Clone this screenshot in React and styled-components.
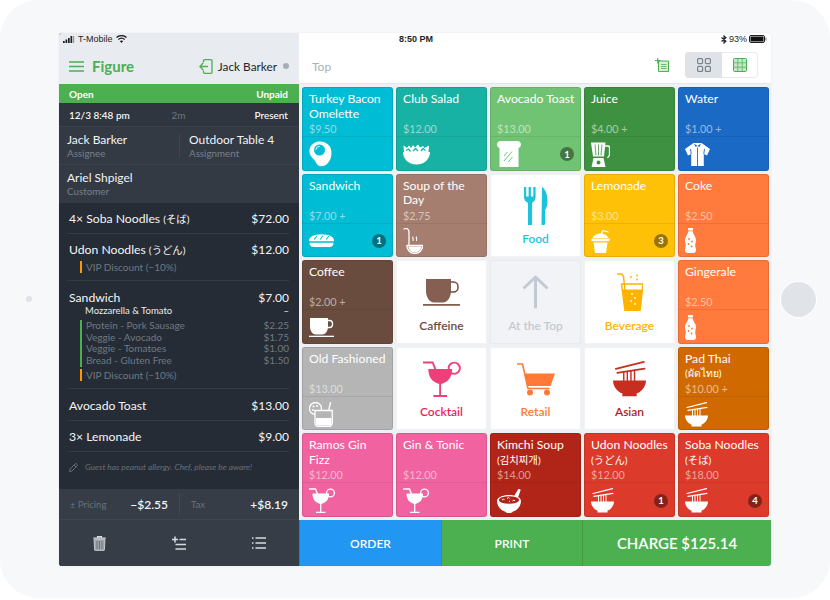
import React from 'react'
import styled, { createGlobalStyle } from 'styled-components'

const FONT = `Lato, "Noto Sans CJK JP", "Noto Sans CJK KR", "Noto Sans", sans-serif`

const GlobalStyle = createGlobalStyle`
  html, body { margin: 0; padding: 0; background: #fff; }
  body { font-family: ${FONT}; -webkit-font-smoothing: antialiased; }
`

/* ---------- icons ---------- */

const Svg = ({ w, h, vw, vh, children }) => (
  <svg width={w} height={h} viewBox={`0 0 ${vw} ${vh}`} fill="none" style={{ display: 'block' }}>
    {children}
  </svg>
)

const Egg = ({ w = 23, h = 26 }) => (
  <Svg w={w} h={h} vw={23} vh={26}>
    <path d="M10 .5c6.5-.5 12.5 4 12.5 11 0 5-1.5 8-3.5 10.5-2.5 3-6 3.800-8.500 3-3-1-3.500-4-5.500-6.500C3 16.500.4 14 .4 10.500.4 5 4 1 10 .5z" fill="currentColor" />
    <circle cx="10.5" cy="9" r="5.5" fill="var(--tile)" />
    <path d="M7 8.500a3.500 3.500 0 0 1 3.500-3" stroke="currentColor" strokeWidth="1.2" strokeLinecap="round" opacity=".8" />
  </Svg>
)

const Salad = ({ w = 27, h = 21 }) => (
  <Svg w={w} h={h} vw={27} vh={21}>
    <path d="M0 8h27c0 6.5-5 12.500-13.500 12.500S0 14.500 0 8z" fill="currentColor" />
    <path d="M1 8 .5 1.500 4 4l2-2.500L8 4l2-3 2 2.500L15 .5l2 3 3-1.500 1.500 2L26 1.500 25.500 8z" fill="currentColor" />
    <path d="M3 6.500 5.500 5l2 2.500M10 7l2.500-2.500L15 7M18 7l2-2.500 2.500 2" stroke="var(--tile)" strokeWidth="1.3" />
  </Svg>
)

const Toast = ({ w = 24, h = 26 }) => (
  <Svg w={w} h={h} vw={24} vh={26}>
    <path d="M4 0h16c2.500 0 4 1.500 4 3.500 0 1.800-1 3-2.500 3.500v18.500a.5.500 0 0 1-.5.500H3a.5.500 0 0 1-.5-.5V7C1 6.500 0 5.300 0 3.500 0 1.500 1.500 0 4 0z" fill="currentColor" />
    <path d="M7 15l3.500-4M7 20l8-9.500M11 21l4.500-5" stroke="var(--tile)" strokeWidth="1" />
  </Svg>
)

const Baguette = ({ w = 25, h = 13 }) => (
  <Svg w={w} h={h} vw={25} vh={13}>
    <path d="M0 6.500C0 3 5 .2 12.500 .2S25 3 25 6.500c0 .4-.3.700-.7.700H.7C.3 7.200 0 6.900 0 6.500z" fill="currentColor" />
    <path d="M5.500 5 7.500 2.500M11.500 5l2-2.800M17.500 5l2-2.500" stroke="var(--tile)" strokeWidth="1.1" strokeLinecap="round" />
    <path d="M.5 8.800h24c.3 2.400-1.500 4.200-4 4.200h-16c-2.500 0-4.300-1.800-4-4.200z" fill="currentColor" />
  </Svg>
)

const Ladle = ({ w = 20, h = 26 }) => (
  <Svg w={w} h={h} vw={20} vh={26}>
    <path d="M1 1c3-1.500 5 .5 5 3v13" stroke="currentColor" strokeWidth="1.3" strokeLinecap="round" />
    <path d="M4 17.500h15.500c.5 4-3.200 8-7.700 8S3.500 21.500 4 17.500z" fill="none" stroke="currentColor" strokeWidth="1.3" />
    <path d="M5.300 18.500h13c-.2 3-3 6-6.500 6s-6.300-3-6.500-6z" fill="currentColor" />
    <path d="M10 9c-1 1 1 2 0 3.500M13.500 9c-1 1 1 2 0 3.500" stroke="currentColor" strokeWidth="1.1" strokeLinecap="round" />
  </Svg>
)

const Blender = ({ w = 19, h = 25 }) => (
  <Svg w={w} h={h} vw={19} vh={25}>
    <path d="M0 .5h14.500l-1.500 14H2z" fill="currentColor" />
    <path d="M14 4h3a1.500 1.500 0 0 1 1.500 1.500V13l-2 3" stroke="currentColor" strokeWidth="1.3" />
    <path d="M4 2.500l1 11M7.500 2.500v11M11 2.500l-1 11" stroke="var(--tile)" strokeWidth=".8" />
    <path d="M2.500 16h10l2 9H.5z" fill="currentColor" />
    <circle cx="7.5" cy="20.5" r="2" fill="var(--tile)" />
  </Svg>
)

const Shirt = ({ w = 25, h = 23 }) => (
  <Svg w={w} h={h} vw={25} vh={23}>
    <path d="M8.500 0h8L25 6l-3 6.500-3.200-1.500V23H6.200V11L3 12.500 0 6z" fill="currentColor" />
    <path d="M9 .5 12.500 3 16 .5 14.500 4l-2-1-2 1z" fill="var(--tile)" />
    <path d="M12.500 4.500V23M5.500 6l.7 5M19.500 6l-.7 5" stroke="var(--tile)" strokeWidth=".9" />
  </Svg>
)

const Smoothie = ({ w = 19, h = 24 }) => (
  <Svg w={w} h={h} vw={19} vh={24}>
    <path d="M9.500 7 12 1.500l5 1.500" stroke="currentColor" strokeWidth="1.3" strokeLinecap="round" />
    <path d="M1.500 9C3 6 6 4.500 9.500 4.500S16 6 17.500 9z" fill="currentColor" />
    <rect x=".3" y="9.5" width="18.4" height="2.8" rx="1" fill="currentColor" />
    <path d="M2.500 13.500h14L15 24H4z" fill="currentColor" />
  </Svg>
)

const Bottle = ({ w = 11, h = 25 }) => (
  <Svg w={w} h={h} vw={11} vh={25}>
    <rect x="3" y="0" width="5" height="2.5" rx=".5" fill="currentColor" />
    <path d="M3.300 3.300h4.400c0 3 3.300 5 3.300 9 0 2-.8 3-.8 5 0 2 .8 3 .8 5 0 1.500-1 2.700-2.500 2.700h-6C1 25 0 23.800 0 22.300c0-2 .8-3 .8-5s-.8-3-.8-5c0-4 3.300-6 3.300-9z" fill="currentColor" />
    <circle cx="4" cy="11" r=".9" fill="var(--tile)" />
    <circle cx="7" cy="13.5" r=".9" fill="var(--tile)" />
    <circle cx="3.5" cy="16" r=".9" fill="var(--tile)" />
    <circle cx="6.5" cy="18.5" r=".9" fill="var(--tile)" />
  </Svg>
)

const Coffee = ({ w = 25, h = 19 }) => (
  <Svg w={w} h={h} vw={25} vh={19}>
    <path d="M1 0h18v8.500c0 4.500-2.500 8-6 8H7c-3.500 0-6-3.500-6-8z" fill="currentColor" />
    <path d="M19 2.500h1.500a3 3 0 0 1 3 3v1a3 3 0 0 1-3 3H18.500" stroke="currentColor" strokeWidth="1.3" />
    <rect x="0" y="17.7" width="25" height="1.3" fill="currentColor" />
  </Svg>
)

const OldFashioned = ({ w = 24, h = 25 }) => (
  <Svg w={w} h={h} vw={24} vh={25}>
    <circle cx="6.5" cy="6.5" r="6" stroke="currentColor" strokeWidth="1.3" fill="var(--tile)" />
    <circle cx="4.5" cy="4.5" r="1" fill="currentColor" />
    <circle cx="8" cy="4" r="1" fill="currentColor" />
    <circle cx="4" cy="8" r="1" fill="currentColor" />
    <path d="M21.500 0 19 12" stroke="currentColor" strokeWidth="1.3" strokeLinecap="round" />
    <path d="M6 8.500h17.300V21a3.500 3.500 0 0 1-3.500 3.500H9.500A3.500 3.500 0 0 1 6 21z" fill="var(--tile)" stroke="currentColor" strokeWidth="1.3" />
    <path d="M7 16h15.500v5a2.500 2.500 0 0 1-2.500 2.500H9.500A2.500 2.500 0 0 1 7 21z" fill="currentColor" />
  </Svg>
)

const Noodles = ({ w = 23, h = 25, fill }) => (
  <Svg w={w} h={h} vw={23} vh={25}>
    <g stroke={fill || 'currentColor'}>
      <path d="M2 5.500 21.500.6M3 8.300l19-3" strokeWidth="1.2" strokeLinecap="round" />
      <path d="M7.500 7.500v7M10 7v7M12.500 7v7M15 6.800V14" strokeWidth="1" />
    </g>
    <path d="M0 13.500h23c0 4.800-4 8.500-6.500 9v2h-10v-2C4 22 0 18.300 0 13.500z" fill={fill || 'currentColor'} />
  </Svg>
)

const Martini = ({ w = 26, h = 25 }) => (
  <Svg w={w} h={h} vw={26} vh={25}>
    <path d="M0 1h6.500l2 5" stroke="currentColor" strokeWidth="1.3" strokeLinecap="round" />
    <circle cx="21.5" cy="5" r="3.9" fill="var(--tile)" stroke="currentColor" strokeWidth="1.3" />
    <path d="M3.500 5.500h16.500c0 6-3 9.500-8.200 10.500C6.500 15 3.500 11.500 3.500 5.500z" fill="currentColor" />
    <path d="M11.700 15v9M7 24.300h9.500" stroke="currentColor" strokeWidth="1.3" />
  </Svg>
)

const Kimchi = ({ w = 25, h = 25 }) => (
  <Svg w={w} h={h} vw={25} vh={25}>
    <path d="M16.500 9 21 1.500c.8-1.200 3-.5 2.500 1L20.500 11z" fill="currentColor" />
    <path d="M0 13c0-3.500 5.500-6 12-6s12 2.500 12 6c0 5.500-4 9.500-8 10.500-1 1-2 1.500-4 1.500s-3-.5-4-1.500C4 22.500 0 18.500 0 13z" fill="currentColor" />
    <ellipse cx="12" cy="12" rx="10.2" ry="3.8" fill="var(--tile)" />
    <path d="M5 12l1.500-1 1 1M10 10.500l1.500-1 1 1M15.500 13l1.500-1 1 1M13 13.500l-1-.5" stroke="currentColor" strokeWidth="1" />
  </Svg>
)

const Cutlery = () => (
  <Svg w={24} h={38} vw={24} vh={38}>
    <path d="M0 0h2.200v9.500h2.400V0h2.300v9.500h2.400V0h2.300v10c0 3-2 5-3.500 5.800V38H4V15.800C1.800 15 0 13 0 10z" fill="currentColor" />
    <path d="M18 0c3 1.500 5.500 7 5.500 14 0 4-1 7.500-2.500 9v14c0 .6-.5 1-1 1h-1.800c-.5 0-.7-.4-.7-1z" fill="currentColor" />
  </Svg>
)

const BigCoffee = () => (
  <Svg w={37} h={27} vw={37} vh={27}>
    <path d="M3 0h25v12c0 6-3.500 11.500-8 11.500h-9C6.500 23.500 3 18 3 12z" fill="#856052" />
    <path d="M28 3h2.500a4.500 4.500 0 0 1 4.500 4.500v1a4.500 4.500 0 0 1-4.500 4.500H27.500" stroke="#6a4d40" strokeWidth="1.5" />
    <rect x="0" y="25" width="37" height="1.8" fill="#856052" />
  </Svg>
)

const ArrowUp = () => (
  <Svg w={25} h={34} vw={25} vh={34}>
    <path d="M12.500 32V2M1.500 12.500l11-10.500 11 10.500" stroke="#c3cad3" strokeWidth="3" strokeLinecap="round" strokeLinejoin="round" />
  </Svg>
)

const Beverage = () => (
  <Svg w={26} h={38} vw={26} vh={38}>
    <path d="M0 1h3.500c1.500 0 2.500 1 3 2.500L10 36" stroke="#ffb300" strokeWidth="1.5" strokeLinecap="round" />
    <path d="M4.500 11h21.500l-3 26.500H8z" fill="none" stroke="#ffb300" strokeWidth="1.5" />
    <path d="M5.500 16.500h20L23 37.500H8z" fill="#ffb300" />
    <circle cx="14" cy="4" r=".9" fill="#ffb300" />
    <circle cx="20" cy="2.5" r=".9" fill="#ffb300" />
    <circle cx="20" cy="6.5" r=".9" fill="#ffb300" />
    <circle cx="15" cy="21" r=".9" fill="#fff" />
    <circle cx="18" cy="25" r=".9" fill="#fff" />
    <circle cx="14" cy="28" r=".9" fill="#fff" />
    <circle cx="18" cy="31" r=".9" fill="#fff" />
  </Svg>
)

const Cart = () => (
  <Svg w={38} h={33} vw={38} vh={33}>
    <path d="M0 1h5.500l5.500 24.500h21" stroke="#ff7a36" strokeWidth="1.6" strokeLinecap="round" strokeLinejoin="round" />
    <path d="M7.500 10.500H38l-4.500 12.500H10.300z" fill="#ff7a36" />
    <circle cx="13" cy="29.5" r="3" fill="#ff7a36" />
    <circle cx="30" cy="29.5" r="3" fill="#ff7a36" />
  </Svg>
)

/* ---------- data ---------- */

const Cjk = styled.span`
  font-size: 0.85em;
  white-space: nowrap;
`

const tiles = [
  { name: 'Turkey Bacon Omelette', price: '$9.50', bg: '#00bcd4', icon: <Egg /> },
  { name: 'Club Salad', price: '$12.00', bg: '#17b2a4', icon: <Salad /> },
  { name: 'Avocado Toast', price: '$13.00', bg: '#71c374', icon: <Toast />, count: 1 },
  { name: 'Juice', price: '$4.00 +', bg: '#3f9142', icon: <Blender /> },
  { name: 'Water', price: '$1.00 +', bg: '#1a69c4', icon: <Shirt /> },
  { name: 'Sandwich', price: '$7.00 +', bg: '#00bcd4', icon: <Baguette />, count: 1 },
  { name: 'Soup of the Day', price: '$2.75', bg: '#a67e6f', icon: <Ladle /> },
  { cat: 'Food', color: '#1cc3da', icon: <Cutlery /> },
  { name: 'Lemonade', price: '$3.00', bg: '#ffc107', icon: <Smoothie />, count: 3 },
  { name: 'Coke', price: '$2.50', bg: '#ff7a3c', icon: <Bottle /> },
  { name: 'Coffee', price: '$2.00 +', bg: '#6a4c3f', icon: <Coffee /> },
  { cat: 'Caffeine', color: '#6a4c3f', icon: <BigCoffee /> },
  { cat: 'At the Top', color: '#c3cad3', muted: true, icon: <ArrowUp /> },
  { cat: 'Beverage', color: '#ffb300', icon: <Beverage /> },
  { name: 'Gingerale', price: '$2.50', bg: '#ff7a3c', icon: <Bottle /> },
  { name: 'Old Fashioned', price: '$13.00', bg: '#b5b5b5', icon: <OldFashioned /> },
  { cat: 'Cocktail', color: '#e91e63', iconColor: '#ec407a', icon: <Martini w={38} h={36} /> },
  { cat: 'Retail', color: '#ff7a36', icon: <Cart /> },
  { cat: 'Asian', color: '#b71c1c', icon: <Noodles w={33} h={38} fill="#c62f20" /> },
  { name: 'Pad Thai', native: '(ผัดไทย)', price: '$10.00 +', bg: '#d06a00', icon: <Noodles /> },
  { name: 'Ramos Gin Fizz', price: '$12.00', bg: '#f063a0', icon: <Martini /> },
  { name: 'Gin & Tonic', price: '$12.00', bg: '#f063a0', icon: <Martini /> },
  { name: 'Kimchi Soup', native: '(김치찌개)', price: '$14.00', bg: '#b12418', icon: <Kimchi /> },
  { name: 'Udon Noodles', native: '(うどん)', price: '$12.00', bg: '#dc3a2b', icon: <Noodles />, count: 1 },
  { name: 'Soba Noodles', native: '(そば)', price: '$18.00', bg: '#dc3a2b', icon: <Noodles />, count: 4 },
]

const sandwichMods = [
  ['Protein - Pork Sausage', '$2.25'],
  ['Veggie - Avocado', '$1.75'],
  ['Veggie - Tomatoes', '$1.00'],
  ['Bread - Gluten Free', '$1.50'],
]

/* ---------- device ---------- */

const Device = styled.div`
  position: relative;
  width: 830px;
  height: 598px;
  box-sizing: border-box;
  padding: 33px 59px 32px;
  background: #f7f8fa;
  border-radius: 38px;
`

const Camera = styled.span`
  position: absolute;
  left: 26px;
  top: 296px;
  width: 6px;
  height: 6px;
  border-radius: 50%;
  background: #dfe3e7;
`

const HomeButton = styled.span`
  position: absolute;
  left: 781px;
  top: 282px;
  width: 35px;
  height: 35px;
  border-radius: 50%;
  background: #e0e4e8;
  box-shadow: 0 0 0 1px #fff;
`

const Screen = styled.div`
  display: grid;
  grid-template-columns: 240px 472px;
  height: 533px;
  border-radius: 3px;
  overflow: hidden;
  box-shadow: 0 0 1px rgba(60, 70, 80, 0.3);
`

/* ---------- left panel ---------- */

const Panel = styled.aside`
  display: flex;
  flex-direction: column;
  background: #262c35;
  color: #fff;
`

const LeftTop = styled.div`
  height: 51px;
  box-sizing: border-box;
  background: #e8ebef;
  color: #26292d;
`

const StatusBar = styled.div`
  display: flex;
  align-items: center;
  gap: 3px;
  height: 12px;
  padding: 0 4px;
  font: 400 9px/12px "Liberation Sans", sans-serif;
  color: #1d1f22;
`

const Clock = styled.b`
  margin-left: 96px;
  font-weight: 700;
`

const StatusRight = styled.div`
  display: flex;
  align-items: center;
  gap: 2px;
  margin-left: auto;
`

const BrandRow = styled.div`
  display: flex;
  align-items: center;
  height: 39px;
  padding: 3px 10px 0 10px;
  box-sizing: border-box;
`

const Brand = styled.span`
  margin-left: 8px;
  font-size: 15px;
  font-weight: 700;
  color: #4caf50;
  flex: 1;
`

const UserName = styled.span`
  margin: 0 5px;
  font-size: 11.8px;
  color: #23262a;
`

const Dot = styled.span`
  width: 6px;
  height: 6px;
  margin-left: 1px;
  border-radius: 50%;
  background: #a5adb6;
`

const GreenBar = styled.div`
  display: flex;
  justify-content: space-between;
  align-items: center;
  height: 19px;
  padding: 0 11px 0 10px;
  background: #4caf50;
  font-size: 10px;
  font-weight: 700;
`

const TimeRow = styled.div`
  display: grid;
  grid-template-columns: 1fr 1fr 1fr;
  align-items: center;
  height: 23px;
  padding: 0 11px 0 10px;
  background: #2f3640;
  font-size: 10px;
  font-weight: 500;
  white-space: nowrap;
  span:nth-child(2) { text-align: center; color: #6e7882; font-weight: 400; }
  span:nth-child(3) { text-align: right; }
`

const InfoRow = styled.div`
  display: grid;
  grid-template-columns: ${p => p.$split ? '112px 1fr' : '1fr'};
  align-items: center;
  height: ${p => p.$h}px;
  padding-left: 8px;
  background: #333a44;
  border-top: 1px solid #3a414b;
  box-sizing: border-box;
`

const InfoCell = styled.div`
  display: flex;
  flex-direction: column;
  ${p => p.$divided && `
    height: 24px;
    justify-content: center;
    padding-left: 9px;
    border-left: 1px solid #3f4650;
  `}
`

const InfoTitle = styled.span`
  font-size: 12px;
  line-height: 14px;
  color: #f1f3f5;
`

const InfoSub = styled.span`
  font-size: 9.8px;
  line-height: 12px;
  color: #76808a;
`

const Items = styled.div`
  flex: 1;
  padding: 0 10px 0 8px;
`

const Item = styled.div`
  height: ${p => p.$h}px;
  box-sizing: border-box;
  padding: ${p => p.$pad || 7}px 0 0 2px;
  border-bottom: 1px solid #343b45;
`

const ItemRow = styled.div`
  display: flex;
  justify-content: space-between;
  align-items: center;
  height: 17px;
  font-size: 12.2px;
  color: #f4f5f6;
  b { font-weight: 400; font-size: 12px; }
`

const Variant = styled.div`
  display: flex;
  justify-content: space-between;
  height: 12px;
  padding-left: 16px;
  font-size: 9.5px;
  line-height: 12px;
  margin-top: -1px;
  color: #e8eaec;
`

const Note = styled.div`
  margin: ${p => p.$mt || 3}px 0 0 11px;
  padding-left: 4px;
  border-left: 2px solid ${p => p.$bar};
  font-size: 10px;
  color: #6f7983;
`

const NoteLine = styled.div`
  display: flex;
  justify-content: space-between;
  height: 11.7px;
  line-height: 11.7px;
`

const Allergy = styled.div`
  display: flex;
  align-items: center;
  gap: 7px;
  height: 30px;
  padding-left: 2px;
  font-size: 8.4px;
  font-style: italic;
  color: #66707a;
`

const Pricing = styled.div`
  display: grid;
  grid-template-columns: 109px 1fr;
  align-items: center;
  height: 31px;
  padding: 0 11px 0 11px;
  background: #363d47;
  border-bottom: 1px solid #3f4650;
  box-sizing: border-box;
`

const PriceCell = styled.div`
  display: flex;
  justify-content: space-between;
  align-items: center;
  height: 22px;
  ${p => p.$divided ? `
    padding-left: 11px;
    border-left: 1px solid #434a54;
  ` : 'padding-right: 11px;'}
  span { font-size: 9.5px; color: #68727c; }
  b { font-size: 12px; font-weight: 600; color: #f0f2f4; }
`

const ActionBar = styled.div`
  display: grid;
  grid-template-columns: 1fr 1fr 1fr;
  height: 46px;
  background: #363d47;
  color: #d8dcdf;
`

const ActionCell = styled.div`
  display: flex;
  align-items: center;
  justify-content: center;
`

/* ---------- right panel ---------- */

const Main = styled.main`
  display: flex;
  flex-direction: column;
  background: #fff;
  min-width: 0;
`

const MainTop = styled.div`
  height: 51px;
  box-sizing: border-box;
  border-bottom: 1px solid #e3e6ea;
`

const Toolbar = styled.div`
  display: flex;
  align-items: center;
  height: 38px;
  padding: 2px 13px 0 13px;
  box-sizing: border-box;
`

const Crumb = styled.span`
  flex: 1;
  padding-top: 3px;
  font-size: 12px;
  color: #a9b0b8;
`

const Toggle = styled.div`
  display: grid;
  grid-template-columns: 37px 36px;
  height: 26px;
  margin-left: 16px;
  border-radius: 4px;
  overflow: hidden;
  box-shadow: inset 0 0 0 1px #e8ebef;
`

const ToggleCell = styled.div`
  display: flex;
  align-items: center;
  justify-content: center;
  background: ${p => p.$active ? '#dfe3e8' : 'transparent'};
`

const Grid = styled.div`
  flex: 1;
  display: grid;
  grid-template-columns: repeat(5, 1fr);
  grid-template-rows: repeat(5, 1fr);
  gap: 3px;
  padding: 3px 2px 3px 3px;
  background: #eef0f3;
  min-height: 0;
`

const Tile = styled.div`
  --tile: ${p => p.$bg};
  display: flex;
  flex-direction: column;
  background: ${p => p.$bg};
  border-radius: 3px;
  box-shadow: inset 0 0 0 1px rgba(0, 0, 0, 0.1);
  color: #fff;
  overflow: hidden;
`

const TileText = styled.div`
  display: flex;
  flex-direction: column;
  justify-content: space-between;
  height: 50px;
  box-sizing: border-box;
  padding: 5px 6px 0 7px;
  border-bottom: 1px solid rgba(0, 0, 0, 0.07);
`

const TileName = styled.div`
  font-size: 12.2px;
  line-height: 14.5px;
`

const TilePrice = styled.div`
  font-size: 10.8px;
  line-height: 14px;
  color: rgba(255, 255, 255, 0.55);
`

const TileFoot = styled.div`
  flex: 1;
  display: flex;
  align-items: center;
  justify-content: space-between;
  padding: 1px 7px 0 7px;
`

const Badge = styled.span`
  display: flex;
  align-items: center;
  justify-content: center;
  width: 14px;
  height: 14px;
  border-radius: 50%;
  background: rgba(0, 0, 0, 0.4);
  font-size: 9.5px;
  font-weight: 700;
`

const CategoryTile = styled.div`
  --tile: #fff;
  display: flex;
  flex-direction: column;
  align-items: center;
  background: ${p => p.$muted ? '#f1f3f6' : '#fff'};
  border-radius: 3px;
  box-shadow: inset 0 0 0 1px ${p => p.$muted ? '#e6e9ed' : '#f0f2f4'};
  color: ${p => p.$color};
`

const CategoryIcon = styled.div`
  flex: 1;
  display: flex;
  align-items: center;
  justify-content: center;
  padding-top: 8px;
  color: ${p => p.$color};
`

const CategoryLabel = styled.div`
  height: 27px;
  font-size: 12px;
  font-weight: 600;
  line-height: 17px;
`

const ButtonBar = styled.div`
  display: grid;
  grid-template-columns: 142px 141px 189px;
  height: 46px;
`

const ActionButton = styled.div`
  display: flex;
  align-items: center;
  justify-content: center;
  background: ${p => p.$bg};
  border-left: 1px solid rgba(0, 0, 0, 0.13);
  color: #fff;
  font-size: ${p => p.$size || 12}px;
  font-weight: 600;
`

const TopBars = () => (
  <svg width="12" height="7" viewBox="0 0 12 7" fill="#1d1f22" style={{ display: 'block' }}>
    <rect x="0" y="5" width="1.7" height="2" />
    <rect x="2.5" y="3.5" width="1.7" height="3.5" />
    <rect x="5" y="2" width="1.7" height="5" />
    <rect x="7.5" y="0" width="1.7" height="7" />
    <rect x="10" y="0" width="1.2" height="7" opacity=".4" />
  </svg>
)

const Wifi = () => (
  <svg width="11" height="8" viewBox="0 0 11 8" fill="none" stroke="#1d1f22" strokeWidth="1.3" style={{ display: 'block' }}>
    <path d="M.5 2.500c2.800-2.500 7.200-2.500 10 0M2.300 4.400c1.800-1.500 4.600-1.500 6.400 0" />
    <path d="M5.500 8 3.800 6c1-.8 2.400-.8 3.400 0z" fill="#1d1f22" stroke="none" />
  </svg>
)

const Bluetooth = () => (
  <svg width="6" height="9" viewBox="0 0 6 9" fill="none" stroke="#1d1f22" strokeWidth="1.1" style={{ display: 'block' }}>
    <path d="M.5 2.500 5 6.200 3 8V1L5 2.800.5 6.500" />
  </svg>
)

const Battery = () => (
  <svg width="18" height="8" viewBox="0 0 18 8" style={{ display: 'block' }}>
    <rect x=".5" y=".5" width="15" height="7" rx="1.5" fill="none" stroke="#1d1f22" />
    <rect x="1.5" y="1.5" width="13" height="5" rx=".5" fill="#111" />
    <rect x="16.3" y="2.5" width="1.2" height="3" rx=".5" fill="#888" />
  </svg>
)

const Burger = () => (
  <svg width="15" height="11" viewBox="0 0 15 11" stroke="#4caf50" strokeWidth="1.6" style={{ display: 'block' }}>
    <path d="M0 1h15M0 5.500h15M0 10h15" />
  </svg>
)

const LogIn = () => (
  <svg width="14" height="15" viewBox="0 0 14 15" fill="none" stroke="#4caf50" strokeWidth="1.3" style={{ display: 'block' }}>
    <path d="M4.500 3.500V1.700a1 1 0 0 1 1-1H12a1 1 0 0 1 1 1v11.600a1 1 0 0 1-1 1H5.500a1 1 0 0 1-1-1v-1.800" />
    <path d="M9 7.500H1M4.200 4 .8 7.500 4.200 11" />
  </svg>
)

const Pencil = () => (
  <svg width="9" height="9" viewBox="0 0 9 9" fill="none" stroke="#6a747e" strokeWidth=".9" style={{ display: 'block' }}>
    <path d="M1 6 6 1c.6-.6 1.400-.5 1.800 0l.2.200c.5.500.5 1.200 0 1.800L3 8 .5 8.500z" />
    <path d="M5 2l2 2" />
  </svg>
)

const Trash = () => (
  <svg width="13" height="15" viewBox="0 0 13 15" style={{ display: 'block' }}>
    <path d="M4.500 1.500V.6h4v.9M.3 2.200h12.400" stroke="#d8dcdf" strokeWidth="1.2" fill="none" />
    <path d="M1 3.300h11l-.6 10.500c0 .6-.5 1-1 1H2.600c-.5 0-1-.4-1-1z" fill="#9ea4a9" stroke="#d8dcdf" strokeWidth=".8" />
    <path d="M4 5v8M6.500 5v8M9 5v8" stroke="#63696f" strokeWidth=".8" />
  </svg>
)

const AddList = () => (
  <svg width="14" height="14" viewBox="0 0 14 14" stroke="#d8dcdf" strokeWidth="1.5" style={{ display: 'block' }}>
    <path d="M0 3.500h6M3 .5v6M7.500 3.500H14M3.500 8.500H14M3.500 13H14" />
  </svg>
)

const ListIcon = () => (
  <svg width="14" height="12" viewBox="0 0 14 12" stroke="#d8dcdf" strokeWidth="1.5" style={{ display: 'block' }}>
    <path d="M0 1h1.500M3.500 1H14M0 6h1.500M3.500 6H14M0 11h1.500M3.500 11H14" />
  </svg>
)

const AddTicket = () => (
  <svg width="14" height="14" viewBox="0 0 14 14" fill="none" stroke="#4caf50" strokeWidth="1.1" style={{ display: 'block' }}>
    <path d="M0 2.500h5.500M2.700 0v5.500" />
    <rect x="3.5" y="3" width="10" height="10.5" rx=".8" fill="#d9efda" stroke="#4caf50" />
    <path d="M6 6.500h5.500M6 8.500h5.500M6 10.500h5.500" strokeWidth=".8" />
  </svg>
)

const TilesIcon = () => (
  <svg width="14" height="14" viewBox="0 0 14 14" fill="none" stroke="#7b838c" strokeWidth="1.2" style={{ display: 'block' }}>
    <rect x=".6" y=".6" width="5" height="5" rx="1" />
    <rect x="8.4" y=".6" width="5" height="5" rx="1" />
    <rect x=".6" y="8.4" width="5" height="5" rx="1" />
    <rect x="8.4" y="8.4" width="5" height="5" rx="1" />
  </svg>
)

const TableIcon = () => (
  <svg width="14" height="14" viewBox="0 0 14 14" style={{ display: 'block' }}>
    <rect x=".5" y=".5" width="13" height="13" rx="1" fill="#c5e6c7" stroke="#4caf50" />
    <path d="M4.800 1v12M9.200 1v12M1 4.800h12M1 9.200h12" stroke="#4caf50" strokeWidth=".7" />
  </svg>
)

const App = () => (
  <>
    <GlobalStyle />
    <Device>
      <Camera />
      <HomeButton />
      <Screen>
        <Panel>
          <LeftTop>
            <StatusBar>
              <TopBars />
              T-Mobile
              <Wifi />
            </StatusBar>
            <BrandRow>
              <Burger />
              <Brand>Figure</Brand>
              <LogIn />
              <UserName>Jack Barker</UserName>
              <Dot />
            </BrandRow>
          </LeftTop>
          <GreenBar><span>Open</span><span>Unpaid</span></GreenBar>
          <TimeRow><span>12/3 8:48 pm</span><span>2m</span><span>Present</span></TimeRow>
          <InfoRow $split $h={38}>
            <InfoCell><InfoTitle>Jack Barker</InfoTitle><InfoSub>Assignee</InfoSub></InfoCell>
            <InfoCell $divided><InfoTitle>Outdoor Table 4</InfoTitle><InfoSub>Assignment</InfoSub></InfoCell>
          </InfoRow>
          <InfoRow $h={39}>
            <InfoCell><InfoTitle>Ariel Shpigel</InfoTitle><InfoSub>Customer</InfoSub></InfoCell>
          </InfoRow>
          <Items>
            <Item $h={31}>
              <ItemRow><span>4× Soba Noodles <Cjk>(そば)</Cjk></span><b>$72.00</b></ItemRow>
            </Item>
            <Item $h={47}>
              <ItemRow><span>Udon Noodles <Cjk>(うどん)</Cjk></span><b>$12.00</b></ItemRow>
              <Note $bar="#ff9800">VIP Discount (−10%)</Note>
            </Item>
            <Item $h={108} $pad={8}>
              <ItemRow><span>Sandwich</span><b>$7.00</b></ItemRow>
              <Variant><span>Mozzarella &amp; Tomato</span><span>–</span></Variant>
              <Note $bar="#4caf50" $mt={3}>
                {sandwichMods.map(([label, cost]) => (
                  <NoteLine key={label}><span>{label}</span><span>{cost}</span></NoteLine>
                ))}
              </Note>
              <Note $bar="#ff9800" $mt={2}>VIP Discount (−10%)</Note>
            </Item>
            <Item $h={32} $pad={8}>
              <ItemRow><span>Avocado Toast</span><b>$13.00</b></ItemRow>
            </Item>
            <Item $h={31}>
              <ItemRow><span>3× Lemonade</span><b>$9.00</b></ItemRow>
            </Item>
            <Allergy><Pencil />Guest has peanut allergy. Chef, please be aware!</Allergy>
          </Items>
          <Pricing>
            <PriceCell><span>± Pricing</span><b>−$2.55</b></PriceCell>
            <PriceCell $divided><span>Tax</span><b>+$8.19</b></PriceCell>
          </Pricing>
          <ActionBar>
            <ActionCell><Trash /></ActionCell>
            <ActionCell><AddList /></ActionCell>
            <ActionCell><ListIcon /></ActionCell>
          </ActionBar>
        </Panel>
        <Main>
          <MainTop>
            <StatusBar>
              <Clock>8:50 PM</Clock>
              <StatusRight>
                <Bluetooth />
                93%
                <Battery />
              </StatusRight>
            </StatusBar>
            <Toolbar>
              <Crumb>Top</Crumb>
              <AddTicket />
              <Toggle>
                <ToggleCell $active><TilesIcon /></ToggleCell>
                <ToggleCell><TableIcon /></ToggleCell>
              </Toggle>
            </Toolbar>
          </MainTop>
          <Grid>
            {tiles.map((t, i) => t.cat ? (
              <CategoryTile key={i} $color={t.color} $muted={t.muted}>
                <CategoryIcon $color={t.iconColor || t.color}>{t.icon}</CategoryIcon>
                <CategoryLabel>{t.cat}</CategoryLabel>
              </CategoryTile>
            ) : (
              <Tile key={i} $bg={t.bg}>
                <TileText>
                  <TileName>
                    {t.name} {t.native && <Cjk>{t.native}</Cjk>}
                  </TileName>
                  <TilePrice>{t.price}</TilePrice>
                </TileText>
                <TileFoot>
                  {t.icon}
                  {t.count && <Badge>{t.count}</Badge>}
                </TileFoot>
              </Tile>
            ))}
          </Grid>
          <ButtonBar>
            <ActionButton $bg="#2196f3">ORDER</ActionButton>
            <ActionButton $bg="#4caf50">PRINT</ActionButton>
            <ActionButton $bg="#4caf50" $size={15}>CHARGE $125.14</ActionButton>
          </ButtonBar>
        </Main>
      </Screen>
    </Device>
  </>
)

export default App
